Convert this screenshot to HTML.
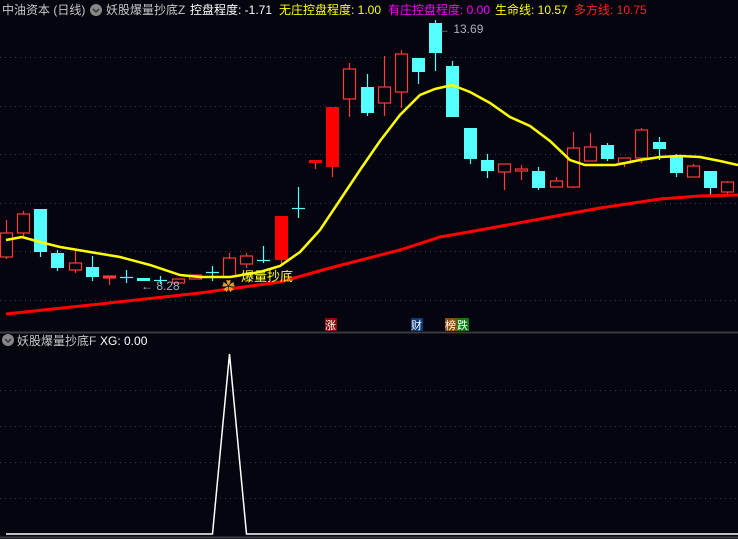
<!DOCTYPE html>
<html><head><meta charset="utf-8"><style>
html,body{margin:0;padding:0;background:#04050e;}
svg{display:block;font-family:"Liberation Sans","Noto Sans CJK SC",sans-serif;}
</style></head><body>
<svg width="738" height="539" viewBox="0 0 738 539" xmlns="http://www.w3.org/2000/svg">
<rect width="738" height="539" fill="#04050e"/>
<g stroke="#3a3a44" stroke-dasharray="1,4" stroke-width="1">
<line x1="0" y1="57.5" x2="738" y2="57.5"/><line x1="0" y1="106.5" x2="738" y2="106.5"/>
<line x1="0" y1="154.5" x2="738" y2="154.5"/><line x1="0" y1="203.5" x2="738" y2="203.5"/>
<line x1="0" y1="251.5" x2="738" y2="251.5"/><line x1="0" y1="300.5" x2="738" y2="300.5"/>
<line x1="0" y1="390.5" x2="738" y2="390.5"/><line x1="0" y1="426.5" x2="738" y2="426.5"/>
<line x1="0" y1="462.5" x2="738" y2="462.5"/><line x1="0" y1="498.5" x2="738" y2="498.5"/>
</g>
<line x1="0" y1="332.5" x2="738" y2="332.5" stroke="#3a3a40" stroke-width="2"/>
<line x1="0" y1="537.5" x2="738" y2="537.5" stroke="#3a3a40" stroke-width="2"/>
<g font-size="12">
<text x="2" y="14" fill="#c8c8c8">中油资本 (日线)</text>
<circle cx="96" cy="10" r="6" fill="#888"/><path d="M93 9 L96 12 L99 9" stroke="#333" stroke-width="1.5" fill="none"/>
<text x="106" y="14" fill="#c8c8c8">妖股爆量抄底Z</text>
<text x="190" y="14" fill="#fff">控盘程度: -1.71</text>
<text x="279" y="14" fill="#ffff00">无庄控盘程度: 1.00</text>
<text x="388" y="14" fill="#ff00ff">有庄控盘程度: 0.00</text>
<text x="495" y="14" fill="#ffff00">生命线: 10.57</text>
<text x="574" y="14" fill="#ff2020">多方线: 10.75</text>
<circle cx="8" cy="340" r="6" fill="#888"/><path d="M5 339 L8 342 L11 339" stroke="#333" stroke-width="1.5" fill="none"/>
<text x="17" y="345" fill="#c8c8c8">妖股爆量抄底F</text>
<text x="100" y="345" fill="#fff">XG: 0.00</text>
</g>
<!-- candles -->
<g stroke-width="1.2">
<g stroke="#ff3a3a" fill="none">
<line x1="6.5" y1="220" x2="6.5" y2="259"/><rect x="0.5" y="233" width="12" height="24" fill="#04050e"/>
<line x1="23.5" y1="211" x2="23.5" y2="236"/><rect x="17.5" y="214" width="12" height="19" fill="#04050e"/>
<line x1="75.5" y1="249" x2="75.5" y2="273"/><rect x="69.5" y="263" width="12" height="7" fill="#04050e"/>
<line x1="109.5" y1="277" x2="109.5" y2="285"/><rect x="103.5" y="276" width="12" height="2" fill="#ff3a3a"/>
<rect x="172.5" y="279" width="12" height="4" fill="#04050e"/>
<rect x="189.5" y="275" width="12" height="4" fill="#04050e"/>
<line x1="229.5" y1="253" x2="229.5" y2="277"/><rect x="223.5" y="258" width="12" height="19" fill="#04050e"/>
<line x1="246.5" y1="253" x2="246.5" y2="268"/><rect x="240.5" y="256" width="12" height="8" fill="#04050e"/>
<line x1="281.5" y1="216" x2="281.5" y2="265"/>
<line x1="315.5" y1="160" x2="315.5" y2="169"/>
<line x1="332.5" y1="107" x2="332.5" y2="177"/>
<line x1="349.5" y1="63" x2="349.5" y2="117"/><rect x="343.5" y="69" width="12" height="30" fill="#04050e"/>
<line x1="384.5" y1="56" x2="384.5" y2="116"/><rect x="378.5" y="87" width="12" height="16" fill="#04050e"/>
<line x1="401.5" y1="50" x2="401.5" y2="108"/><rect x="395.5" y="54" width="12" height="38" fill="#04050e"/>
<line x1="504.5" y1="164" x2="504.5" y2="190"/><rect x="498.5" y="164" width="12" height="8" fill="#04050e"/>
<line x1="521.5" y1="165" x2="521.5" y2="180"/><rect x="515.5" y="169" width="12" height="2" fill="#04050e"/>
<line x1="556.5" y1="177" x2="556.5" y2="187"/><rect x="550.5" y="181" width="12" height="6" fill="#04050e"/>
<line x1="573.5" y1="132" x2="573.5" y2="188"/><rect x="567.5" y="148" width="12" height="39" fill="#04050e"/>
<line x1="590.5" y1="133" x2="590.5" y2="161"/><rect x="584.5" y="147" width="12" height="14" fill="#04050e"/>
<line x1="624.5" y1="158" x2="624.5" y2="167"/><rect x="618.5" y="158" width="12" height="5" fill="#04050e"/>
<line x1="641.5" y1="128" x2="641.5" y2="163"/><rect x="635.5" y="130" width="12" height="28" fill="#04050e"/>
<line x1="693.5" y1="164" x2="693.5" y2="177"/><rect x="687.5" y="166" width="12" height="11" fill="#04050e"/>
<line x1="727.5" y1="181" x2="727.5" y2="196"/><rect x="721.5" y="182" width="12" height="10" fill="#04050e"/>
</g>
<rect x="275" y="216" width="13" height="44" fill="#ff0000"/>
<rect x="309" y="160" width="13" height="3" fill="#ff0000"/>
<rect x="326" y="107" width="13" height="60" fill="#ff0000"/>
<g stroke="#55ffff" fill="#55ffff">
<line x1="40.5" y1="209" x2="40.5" y2="257"/><rect x="34" y="209" width="13" height="43" stroke="none"/>
<line x1="57.5" y1="250" x2="57.5" y2="271"/><rect x="51" y="253" width="13" height="15" stroke="none"/>
<line x1="92.5" y1="256" x2="92.5" y2="281"/><rect x="86" y="267" width="13" height="10" stroke="none"/>
<line x1="126.5" y1="270" x2="126.5" y2="283"/><line x1="120" y1="277.5" x2="133" y2="277.5"/>
<rect x="137" y="278" width="13" height="3" stroke="none"/>
<line x1="160.5" y1="276" x2="160.5" y2="284"/><line x1="154" y1="280.5" x2="167" y2="280.5"/>
<line x1="212.5" y1="266" x2="212.5" y2="281"/><line x1="206" y1="272.5" x2="219" y2="272.5"/>
<line x1="263.5" y1="246" x2="263.5" y2="263"/><line x1="257" y1="260.5" x2="270" y2="260.5"/>
<line x1="298.5" y1="187" x2="298.5" y2="218"/><line x1="292" y1="208.5" x2="305" y2="208.5"/>
<line x1="367.5" y1="74" x2="367.5" y2="116"/><rect x="361" y="87" width="13" height="26" stroke="none"/>
<line x1="418.5" y1="58" x2="418.5" y2="84"/><rect x="412" y="58" width="13" height="14" stroke="none"/>
<line x1="435.5" y1="20" x2="435.5" y2="71"/><rect x="429" y="23" width="13" height="30" stroke="none"/>
<line x1="452.5" y1="61" x2="452.5" y2="117"/><rect x="446" y="66" width="13" height="51" stroke="none"/>
<line x1="470.5" y1="128" x2="470.5" y2="164"/><rect x="464" y="128" width="13" height="31" stroke="none"/>
<line x1="487.5" y1="154" x2="487.5" y2="178"/><rect x="481" y="160" width="13" height="11" stroke="none"/>
<line x1="538.5" y1="167" x2="538.5" y2="190"/><rect x="532" y="171" width="13" height="17" stroke="none"/>
<line x1="607.5" y1="143" x2="607.5" y2="161"/><rect x="601" y="145" width="13" height="14" stroke="none"/>
<line x1="659.5" y1="137" x2="659.5" y2="160"/><rect x="653" y="142" width="13" height="7" stroke="none"/>
<line x1="676.5" y1="154" x2="676.5" y2="177"/><rect x="670" y="157" width="13" height="16" stroke="none"/>
<line x1="710.5" y1="171" x2="710.5" y2="197"/><rect x="704" y="171" width="13" height="17" stroke="none"/>
</g>
</g>
<polyline fill="none" stroke="#ff0000" stroke-width="3" points="6,314 100,304 200,293 280,282 330,268 400,250 440,237 480,230 540,219 600,208 660,199 700,196 738,195"/>
<polyline fill="none" stroke="#ffff00" stroke-width="2.5" points="6,240 22,237 40,242 60,247 90,252 120,257 150,265 180,275 200,277 230,277 260,272 280,266 300,252 320,230 340,200 360,170 380,141 400,115 420,95 435,89 452,85 470,92 490,103 510,117 530,126 550,141 570,160 585,165 615,165 640,160 660,157 680,156 700,157 720,161 738,165"/>
<text x="438" y="33" fill="#aab0c0" font-size="12">← 13.69</text>
<text x="141" y="290" fill="#aab0c0" font-size="12">← 8.28</text>
<text x="241" y="281" fill="#ffff30" font-size="13">爆量抄底</text>
<text x="222" y="291" fill="#e0a020" font-size="13">✿</text>
<g font-size="11" fill="#fff">
<rect x="325" y="318" width="12" height="13" fill="#8a0a0a"/><text x="325" y="329">涨</text>
<rect x="411" y="318" width="12" height="13" fill="#0a3a7a"/><text x="411" y="329">财</text>
<rect x="445" y="318" width="12" height="13" fill="#8a4a0a"/><text x="445" y="329">榜</text>
<rect x="457" y="318" width="12" height="13" fill="#0a7a0a"/><text x="457" y="329">跌</text>
</g>
<polyline fill="none" stroke="#fff" stroke-width="1.5" points="6,534 212.5,534 229.5,354 246.5,534 738,534"/>
</svg>
</body></html>
